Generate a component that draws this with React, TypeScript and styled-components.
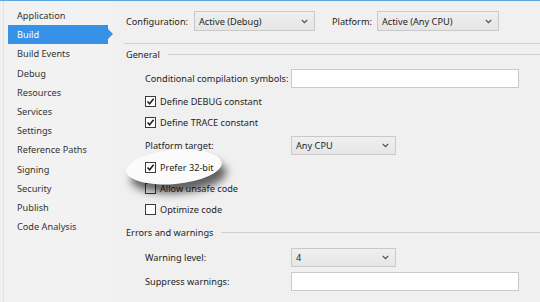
import * as React from 'react';
import { createGlobalStyle, styled } from 'styled-components';

const GlobalStyle = createGlobalStyle`
  html, body {
    margin: 0;
    padding: 0;
    background: #f0f0f0;
  }
  body {
    font-family: 'Noto Sans', 'Open Sans', sans-serif;
    font-size: 9.2px;
    color: #1e1e1e;
  }
`;

const Window = styled.div`
  width: 540px;
  height: 302px;
  display: flex;
  border-top: 1px solid #5aa6e6;
  box-sizing: border-box;
  overflow: hidden;
  background: #f0f0f0;
  white-space: nowrap;
`;

const Sidebar = styled.nav`
  width: 109px;
  flex-shrink: 0;
  display: flex;
  flex-direction: column;
  padding-top: 5px;
  box-sizing: border-box;
  margin-left: 3px;
  border-left: 1px solid #e2e2e2;
  background: #f2f2f2;
`;

const NavItem = styled.div<{ $active?: boolean }>`
  position: relative;
  height: 19.2px;
  line-height: 19px;
  margin-left: 4px;
  padding-left: 9px;
  width: 100px;
  box-sizing: border-box;
  color: ${(p) => (p.$active ? '#ffffff' : '#333333')};
  background: ${(p) => (p.$active ? '#3592e6' : 'transparent')};
  &::after {
    content: '';
    display: ${(p) => (p.$active ? 'block' : 'none')};
    position: absolute;
    right: -5px;
    top: 4px;
    border-top: 5.5px solid transparent;
    border-bottom: 5.5px solid transparent;
    border-left: 5px solid #3592e6;
  }
`;

const Main = styled.div`
  flex: 1;
  position: relative;
  margin-left: 12px;
  display: flex;
  flex-direction: column;
`;

const Toolbar = styled.div`
  height: 43px;
  display: flex;
  align-items: center;
  border-bottom: 1px solid #cfcfcf;
  padding-left: 2px;
  padding-bottom: 2px;
  box-sizing: border-box;
`;

const ToolLabel = styled.span<{ $w: number }>`
  width: ${(p) => p.$w}px;
`;

const Select = styled.div<{ $w: number; $h?: number }>`
  width: ${(p) => p.$w}px;
  height: ${(p) => p.$h ?? 20}px;
  box-sizing: border-box;
  border: 1px solid #c9c9c9;
  background: linear-gradient(#efefef, #e6e6e6);
  display: flex;
  align-items: center;
  justify-content: space-between;
  padding: 0 6px 0 4px;
  color: #1e1e1e;
`;

const Chevron = () => (
  <svg width="7" height="5" viewBox="0 0 7 5">
    <path d="M0.8 1 L3.5 3.6 L6.2 1" fill="none" stroke="#555" strokeWidth="1.3" />
  </svg>
);

const Spacer = styled.div<{ $w: number }>`
  width: ${(p) => p.$w}px;
`;

const Sections = styled.div`
  display: flex;
  flex-direction: column;
`;

const Row = styled.div<{ $h: number; $indent?: boolean }>`
  height: ${(p) => p.$h}px;
  display: flex;
  align-items: center;
  padding-left: ${(p) => (p.$indent ? 21 : 2)}px;
  position: relative;
`;

const GroupTitle = styled.span`
  color: #1e1e1e;
  margin-right: 8px;
`;

const GroupRule = styled.div`
  flex: 1;
  height: 1px;
  background: #cfcfcf;
`;

const FieldLabel = styled.span`
  width: 146px;
  flex-shrink: 0;
`;

const TextInput = styled.div<{ $w: number }>`
  width: ${(p) => p.$w}px;
  height: 19px;
  box-sizing: border-box;
  border: 1px solid #c9c9c9;
  background: #ffffff;
`;

const Box = styled.span`
  width: 11px;
  height: 11px;
  box-sizing: border-box;
  border: 1px solid #3a3a3a;
  background: #fff;
  margin-right: 4px;
  display: flex;
  align-items: center;
  justify-content: center;
`;

const CheckRow = styled(Row)<{ $front?: boolean }>`
  z-index: ${(p) => (p.$front ? 3 : 0)};
`;

const Check = ({ checked }: { checked?: boolean }) => (
  <Box>
    {checked && (
      <svg width="9" height="9" viewBox="0 0 9 9">
        <path d="M1.5 4.6 L3.6 6.8 L7.6 1.8" fill="none" stroke="#1a1a1a" strokeWidth="1.5" />
      </svg>
    )}
  </Box>
);

// white callout ellipse drawn over the form, with its drop shadow
const Spotlight = styled.div`
  position: absolute;
  left: 2px;
  top: 149px;
  width: 96px;
  height: 34px;
  border-radius: 50%;
  background: #fbfbfb;
  transform: rotate(-5deg);
  box-shadow: 4px 9px 8px rgba(0, 0, 0, 0.6);
  z-index: 2;
`;

const navItems = [
  'Application',
  'Build',
  'Build Events',
  'Debug',
  'Resources',
  'Services',
  'Settings',
  'Reference Paths',
  'Signing',
  'Security',
  'Publish',
  'Code Analysis',
];

export default function App() {
  return (
    <>
      <GlobalStyle />
      <Window>
        <Sidebar>
          {navItems.map((n) => (
            <NavItem key={n} $active={n === 'Build'}>
              {n}
            </NavItem>
          ))}
        </Sidebar>
        <Main>
          <Toolbar>
            <ToolLabel $w={68}>Configuration:</ToolLabel>
            <Select $w={121}>
              <span>Active (Debug)</span>
              <Chevron />
            </Select>
            <Spacer $w={17} />
            <ToolLabel $w={45}>Platform:</ToolLabel>
            <Select $w={122}>
              <span>Active (Any CPU)</span>
              <Chevron />
            </Select>
          </Toolbar>
          <Sections>
            <Row $h={21}>
              <GroupTitle>General</GroupTitle>
              <GroupRule />
            </Row>
            <Row $h={26} $indent>
              <FieldLabel>Conditional compilation symbols:</FieldLabel>
              <TextInput $w={228} />
            </Row>
            <CheckRow $h={21} $indent>
              <Check checked />
              Define DEBUG constant
            </CheckRow>
            <CheckRow $h={21} $indent>
              <Check checked />
              Define TRACE constant
            </CheckRow>
            <Row $h={24} $indent>
              <FieldLabel>Platform target:</FieldLabel>
              <Select $w={105} $h={19}>
                <span>Any CPU</span>
                <Chevron />
              </Select>
            </Row>
            <CheckRow $h={21} $indent $front>
              <Check checked />
              Prefer 32-bit
            </CheckRow>
            <CheckRow $h={21} $indent>
              <Check />
              Allow unsafe code
            </CheckRow>
            <CheckRow $h={21} $indent>
              <Check />
              Optimize code
            </CheckRow>
            <Row $h={25}>
              <GroupTitle>Errors and warnings</GroupTitle>
              <GroupRule />
            </Row>
            <Row $h={24} $indent>
              <FieldLabel>Warning level:</FieldLabel>
              <Select $w={105} $h={19}>
                <span>4</span>
                <Chevron />
              </Select>
            </Row>
            <Row $h={24} $indent>
              <FieldLabel>Suppress warnings:</FieldLabel>
              <TextInput $w={228} />
            </Row>
          </Sections>
          <Spotlight />
        </Main>
      </Window>
    </>
  );
}
